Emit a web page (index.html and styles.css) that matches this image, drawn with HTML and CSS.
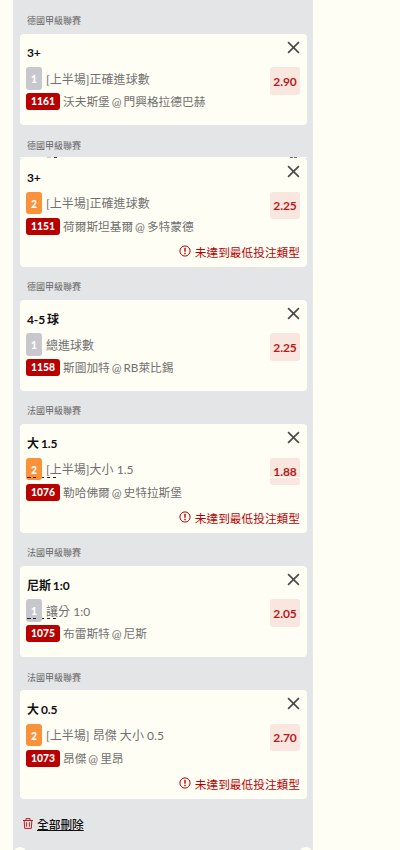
FILE: index.html
```
<!DOCTYPE html>
<html lang="zh-Hant">
<head>
<meta charset="utf-8">
<title>投注單</title>
<link rel="stylesheet" href="styles.css">
</head>
<body>
<svg width="0" height="0" class="defs">
  <symbol id="close" viewBox="0 0 12 12"><path d="M1 1L11 11M11 1L1 11" fill="none" stroke="#4a4a48" stroke-width="1.5"/></symbol>
  <symbol id="warn" viewBox="0 0 12 12"><circle cx="6" cy="6" r="5.1" fill="none" stroke="#b90000"/><path d="M6 2.8V6.8M6 7.8V9.2" stroke="#b90000" stroke-width="1.4"/></symbol>
  <symbol id="trash" viewBox="0 0 10 11"><path d="M0 2.5H10M3 2.3V.6H7V2.3M1.2 2.5L1.7 10.4H8.3L8.8 2.5M3.6 4.3V8.7M6.4 4.3V8.7" fill="none" stroke="#c01c22" stroke-width="1"/></symbol>
</svg>
<main class="slip">
  <h2 class="league">德國甲級聯賽</h2>
  <article class="card first">
    <h3 class="pick">3+</h3>
    <div class="market"><span class="side">1</span><span class="name">[上半場]正確進球數</span></div>
    <div class="match"><span class="code">1161</span><span class="teams">沃夫斯堡 @ 門興格拉德巴赫</span></div>
    <svg class="close"><use href="#close"/></svg>
    <span class="odds">2.90</span>
  </article>
  <h2 class="league low">德國甲級聯賽</h2>
  <article class="card tall seam">
    <h3 class="pick">3+</h3>
    <div class="market"><span class="side away">2</span><span class="name">[上半場]正確進球數</span></div>
    <div class="match"><span class="code">1151</span><span class="teams">荷爾斯坦基爾 @ 多特蒙德</span></div>
    <svg class="close"><use href="#close"/></svg>
    <span class="odds">2.25</span>
    <p class="warning"><svg><use href="#warn"/></svg>未達到最低投注類型</p>
  </article>
  <h2 class="league">德國甲級聯賽</h2>
  <article class="card">
    <h3 class="pick">4-5 球</h3>
    <div class="market"><span class="side">1</span><span class="name">總進球數</span></div>
    <div class="match"><span class="code">1158</span><span class="teams">斯圖加特 @ RB萊比錫</span></div>
    <svg class="close"><use href="#close"/></svg>
    <span class="odds">2.25</span>
  </article>
  <h2 class="league">法國甲級聯賽</h2>
  <article class="card tall">
    <h3 class="pick">大 1.5</h3>
    <div class="market"><span class="side away cut">2</span><span class="name">[上半場]大小 1.5</span></div>
    <div class="match"><span class="code">1076</span><span class="teams">勒哈佛爾 @ 史特拉斯堡</span></div>
    <svg class="close"><use href="#close"/></svg>
    <span class="odds split">1.88</span>
    <p class="warning"><svg><use href="#warn"/></svg>未達到最低投注類型</p>
  </article>
  <h2 class="league">法國甲級聯賽</h2>
  <article class="card">
    <h3 class="pick">尼斯 1:0</h3>
    <div class="market"><span class="side cut">1</span><span class="name">讓分 1:0</span></div>
    <div class="match"><span class="code">1075</span><span class="teams">布雷斯特 @ 尼斯</span></div>
    <svg class="close"><use href="#close"/></svg>
    <span class="odds">2.05</span>
  </article>
  <h2 class="league low">法國甲級聯賽</h2>
  <article class="card tall">
    <h3 class="pick">大 0.5</h3>
    <div class="market"><span class="side away">2</span><span class="name">[上半場] 昂傑 大小 0.5</span></div>
    <div class="match"><span class="code">1073</span><span class="teams">昂傑 @ 里昂</span></div>
    <svg class="close"><use href="#close"/></svg>
    <span class="odds">2.70</span>
    <p class="warning"><svg><use href="#warn"/></svg>未達到最低投注類型</p>
  </article>
  <div class="clear"><svg><use href="#trash"/></svg><a>全部刪除</a></div>
  <div class="next"><i></i><i></i></div>
</main>
</body>
</html>
```
FILE: styles.css
```
* { box-sizing: border-box; }
body {
  margin: 0;
  height: 850px;
  overflow: hidden;
  background: #fffef5;
  font: 11.7px/16px Lato, "Noto Sans CJK TC", sans-serif;
}
h2, h3, p { margin: 0; }
.defs { position: absolute; }
.slip {
  width: 300px;
  height: 850px;
  margin-left: 13px;
  padding: 1px 6px 0 7px;
  background: #e4e5e7;
  overflow: hidden;
}
.league {
  height: 33px;
  padding: 12px 0 0 7px;
  font-size: 9px;
  line-height: 16px;
  font-weight: 400;
  color: #666;
}
.league.low { padding-top: 13px; }
.card {
  position: relative;
  display: grid;
  grid-template-columns: 1fr 30px;
  grid-template-rows: 20px 25px 18px;
  align-content: start;
  height: 91px;
  padding: 12px 7px 0 6px;
  border-radius: 4px;
  background: #fffef5;
}
.card.tall {
  height: 109px;
  grid-template-rows: 21px 25px 17px;
}
.pick {
  padding-left: 1px;
  font-size: 12px;
  font-weight: 700;
  line-height: 16px;
  letter-spacing: -.1px;
  word-spacing: -.8px;
  color: #111;
}
.first .pick { margin-top: -1px; }
.market, .match {
  grid-column: 1;
  display: flex;
  align-items: flex-start;
  color: #707070;
  white-space: nowrap;
}
.market { padding-top: 1px; }
.match { padding-top: 2px; }
.name {
  margin-left: 4px;
  padding-top: 1px;
  font-size: 12px;
  line-height: 24px;
  letter-spacing: .04px;
}
.tall .name { padding-top: 0; }
.teams { margin-left: 3px; line-height: 17px; word-spacing: -1px; }
.side {
  position: relative;
  width: 16px;
  height: 23px;
  border-radius: 3px;
  background: #c8c7ce;
  color: #fff;
  font-size: 10.3px;
  font-weight: 900;
  line-height: 24px;
  text-align: center;
}
.side.away { height: 22px; background: #f9923b; }
.code {
  width: 34px;
  height: 17px;
  border-radius: 3px;
  background: #b90000;
  color: #fff;
  font-size: 10.3px;
  font-weight: 900;
  line-height: 17px;
  text-align: center;
}
.close {
  grid-column: 2;
  grid-row: 1;
  justify-self: end;
  width: 13px;
  height: 13px;
  margin: -5px 0 0 0;
}
.odds {
  position: relative;
  grid-column: 2;
  grid-row: 2 / 4;
  height: 28px;
  margin-top: 1px;
  border-radius: 3px;
  background: #f8e6df;
  color: #b71c1c;
  font-size: 12px;
  font-weight: 700;
  line-height: 29px;
  letter-spacing: -.1px;
  text-align: center;
}
.tall .odds { height: 27px; line-height: 27px; }
.warning {
  grid-column: 1 / 3;
  display: flex;
  justify-content: flex-end;
  margin-top: 11px;
  color: #b90000;
}
.warning svg { width: 12px; height: 12px; margin: 1px 4px 0 0; }
.clear {
  display: flex;
  height: 48px;
  padding: 17px 0 0 3px;
}
.clear svg { width: 10px; height: 11px; margin: 2px 4px 0 0; }
.clear a { font-weight: 500; text-decoration: underline; color: #111; }
.next {
  display: flex;
  justify-content: space-between;
  margin: 0 -6px 0 -7px;
}
.next i { width: 14px; height: 14px; border-radius: 50%; background: #fffef5; }
.seam::before {
  content: "";
  position: absolute;
  top: -1px;
  left: 0;
  width: 287px;
  height: 1px;
  background: linear-gradient(90deg, #fffef5 27px, #ccc 27px 31px, #fffef5 31px 34px, #444 34px 37px, #fffef5 37px 270px, #777 270px 273px, #fffef5 273px 274px, #777 274px 277px, #fffef5 277px);
}
.cut::after {
  content: "";
  position: absolute;
  left: 1px;
  top: 19px;
  width: 30px;
  height: 1px;
  background: linear-gradient(90deg, #222 0 4px, transparent 4px 6px, #222 6px 9px, transparent 9px 15px, #222 15px 17px, transparent 17px 20px, #222 20px 23px, transparent 23px 26px, #222 26px 29px, transparent 29px);
}
.split::after {
  content: "";
  position: absolute;
  left: 0;
  top: 19px;
  width: 30px;
  height: 1px;
  background: #fffef5;
}
```
